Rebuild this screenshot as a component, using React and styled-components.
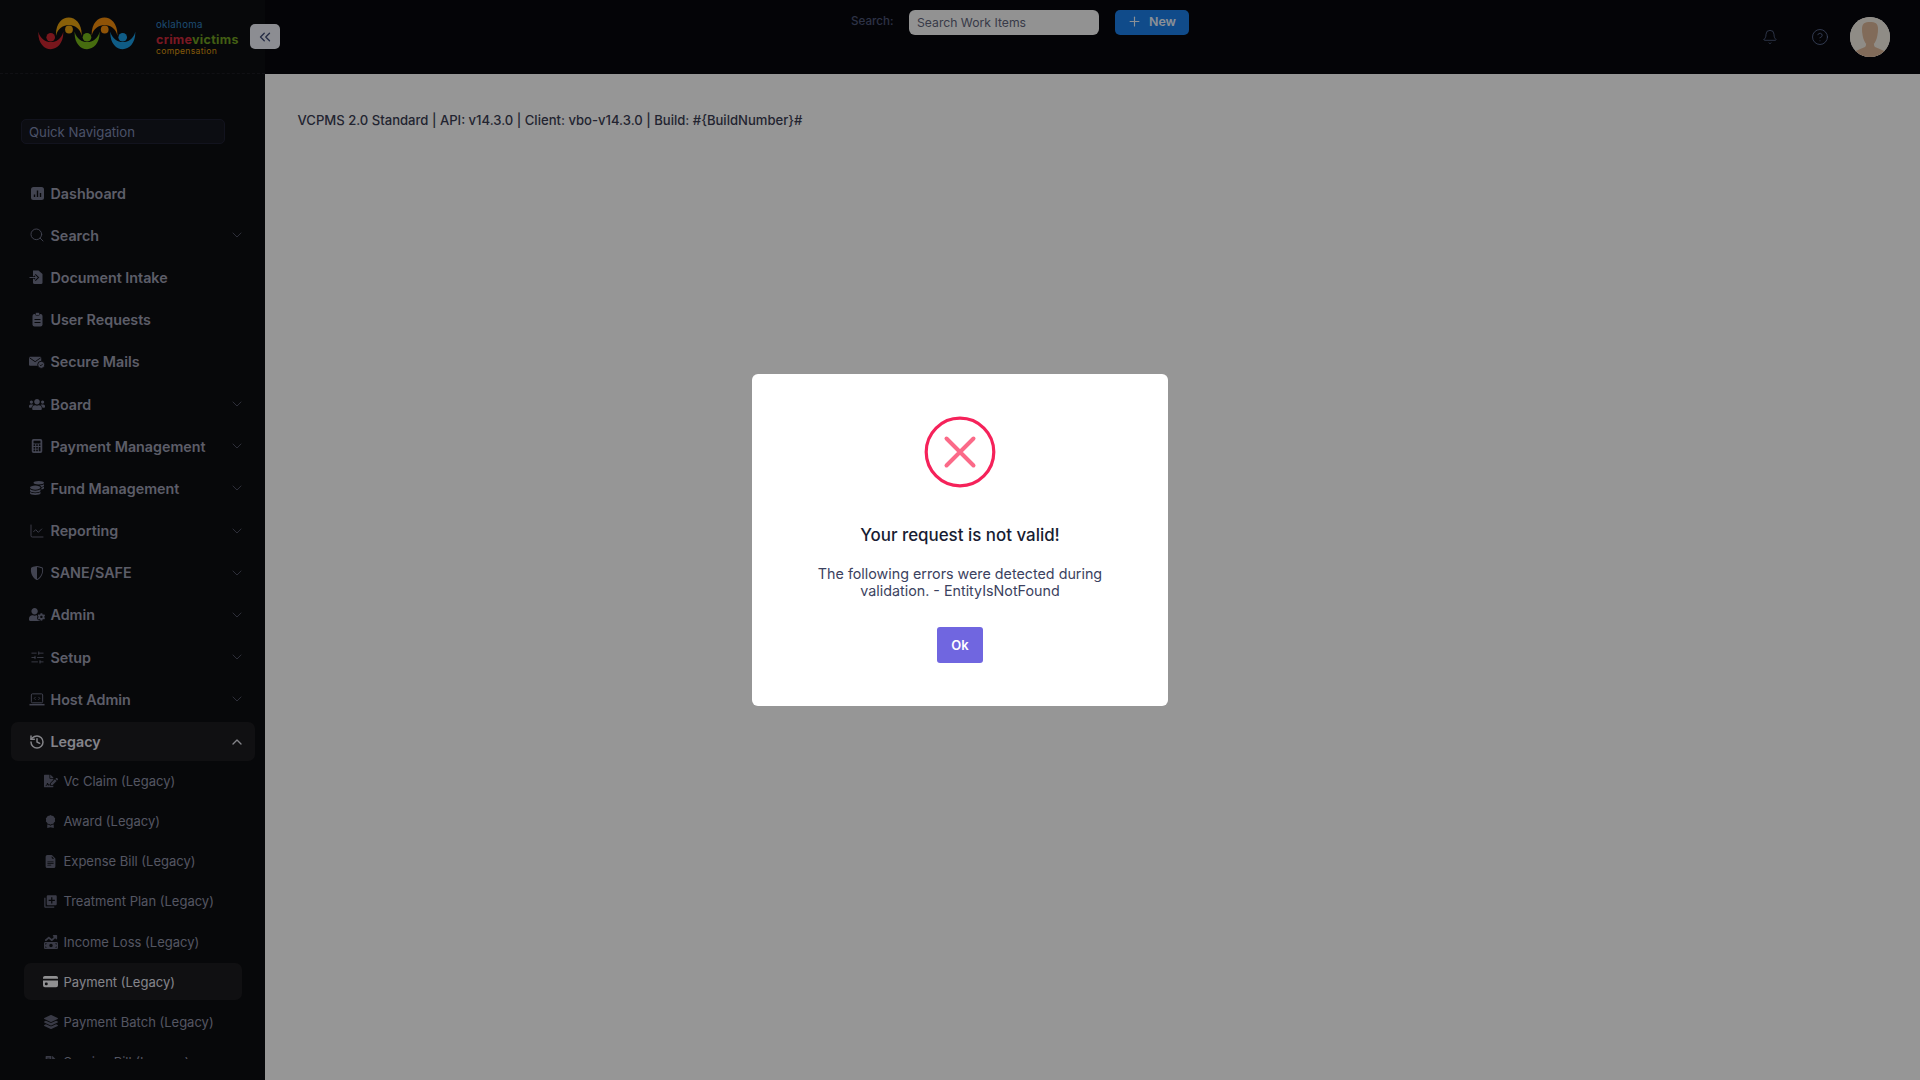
import React from "react";
import styled, { createGlobalStyle } from "styled-components";
import { Search, ChartLine, SlidersHorizontal, History, ChevronDown, ChevronUp, ChevronsLeft, Plus, Bell, CircleHelp } from "lucide-react";
import { FaUsers, FaUserCog, FaFileSignature, FaLayerGroup, FaCoins, FaFileInvoice } from "react-icons/fa";
import { FaMoneyBillTrendUp } from "react-icons/fa6";
import { BsCalculatorFill, BsShieldShaded, BsAwardFill, BsFileEarmarkTextFill, BsCreditCardFill } from "react-icons/bs";
import { MdLibraryAdd } from "react-icons/md";

const GlobalStyle = createGlobalStyle`
  html, body, #root { height: 100%; }
  body {
    margin: 0;
    font-family: Inter, "Liberation Sans", sans-serif;
    background: #f5f5f5;
    overflow: hidden;
  }
  * { box-sizing: border-box; }
`;

const Page = styled.div`
  display: flex;
  height: 1080px;
`;

const Sidebar = styled.aside`
  width: 265px;
  flex-shrink: 0;
  background: #0d0e12;
  display: flex;
  flex-direction: column;
  height: 100%;
`;

const Brand = styled.div`
  height: 74px;
  flex-shrink: 0;
  border-bottom: 1px dashed #1b1c22;
  display: flex;
  align-items: center;
  padding-left: 38px;
  position: relative;
`;

const LogoSvg = styled.svg`
  margin-bottom: 6px;
  flex-shrink: 0;
`;

const BrandText = styled.div`
  margin-left: 20px;
  display: flex;
  flex-direction: column;
  font-family: Inter, sans-serif;
  letter-spacing: 0.3px;
`;

const BrandLine = styled.span`
  font-size: ${(props) => props.size}px;
  line-height: ${(props) => props.lh}px;
  font-weight: ${(props) => props.weight || 400};
  color: ${(props) => props.color};
`;

const Toggle = styled.button`
  position: absolute;
  left: 250px;
  top: 24px;
  z-index: 1;
  width: 30px;
  height: 25px;
  border: 0;
  border-radius: 5px;
  background: #e9ecf4;
  color: #3f4a72;
  display: flex;
  align-items: center;
  justify-content: center;
  padding: 0;
`;

const QuickNav = styled.div`
  margin: 45px 0 0 21px;
  width: 204px;
  height: 25px;
  border: 1px solid #1f2133;
  border-radius: 5px;
  background: #15161f;
  color: #7d88ad;
  font-size: 13.2px;
  line-height: 25px;
  padding-left: 7px;
`;

const NavList = styled.nav`
  margin-top: 30px;
  padding: 0 10px 0 11px;
  height: 884.5px;
  overflow: hidden;
  flex-shrink: 0;
`;

const NavRow = styled.div`
  height: 38.2px;
  margin-bottom: 4px;
  display: flex;
  align-items: center;
  border-radius: 7px;
  padding: 0 10px 0 18px;
  background: ${(props) => (props.open ? "#1c1c1f" : "transparent")};
  color: ${(props) => (props.open ? "#dcdce4" : "#9a9cae")};
  font-size: 14.3px;
  font-weight: 600;
`;

const NavIcon = styled.span`
  width: 16px;
  height: 16px;
  margin-right: 4px;
  flex-shrink: 0;
  display: flex;
  align-items: center;
  justify-content: center;
  color: ${(props) => (props.open ? "#dcdce4" : "#6f7288")};
`;

const NavLabel = styled.span`
  margin-left: 1.5px;
  flex: 1;
`;

const Caret = styled.span`
  display: flex;
  color: ${(props) => (props.open ? "#dcdce4" : "#5d6074")};
`;

const SubList = styled.div`
  margin-top: -2.1px;
  padding: 0 13px;
`;

const SubRow = styled.div`
  height: 36.6px;
  margin-bottom: 3.6px;
  display: flex;
  align-items: center;
  border-radius: 7px;
  padding-left: 18.5px;
  background: ${(props) => (props.active ? "#1c1c1f" : "transparent")};
  color: ${(props) => (props.active ? "#dcdce4" : "#8c8fa3")};
  font-size: 13px;
  font-weight: 400;
`;

const SubIcon = styled.span`
  width: 16px;
  height: 16px;
  margin-right: 5px;
  flex-shrink: 0;
  display: flex;
  align-items: center;
  justify-content: center;
  color: ${(props) => (props.active ? "#f0f0f4" : "#5f6275")};
`;

const Main = styled.div`
  flex: 1;
  display: flex;
  flex-direction: column;
  min-width: 0;
`;

const Header = styled.header`
  height: 74px;
  flex-shrink: 0;
  background: #07080d;
  display: flex;
  padding-top: 10px;
`;

const HeaderCenter = styled.div`
  margin-left: 586px;
  display: flex;
  align-items: flex-start;
`;

const SearchLabel = styled.span`
  width: 58px;
  color: #4c5475;
  font-size: 11.6px;
  font-weight: 500;
  line-height: 25px;
  margin-top: -1.5px;
`;

const SearchBox = styled.div`
  width: 190px;
  height: 25px;
  border-radius: 6px;
  background: #f3f3f3;
  color: #5e6278;
  font-size: 12.2px;
  line-height: 25px;
  padding-left: 8px;
`;

const NewButton = styled.button`
  margin-left: 16px;
  width: 74px;
  height: 25px;
  border: 0;
  border-radius: 5px;
  background: #1b7ee6;
  color: #e8f0fb;
  font-family: inherit;
  font-size: 12.4px;
  font-weight: 600;
  display: flex;
  align-items: center;
  justify-content: center;
  gap: 7px;
  padding: 0 1px 2px 0;
`;

const HeaderRight = styled.div`
  margin-left: auto;
  margin-right: 30px;
  margin-top: 7px;
  display: flex;
  align-items: center;
  align-self: flex-start;
  height: 40px;
`;

const HeaderIcon = styled.span`
  display: flex;
  color: ${(props) => props.color};
  margin-right: ${(props) => props.gap}px;
`;

const Avatar = styled.div`
  width: 40px;
  height: 40px;
  border-radius: 50%;
  overflow: hidden;
  background: #fff;
`;

const Content = styled.main`
  flex: 1;
  background: #fafafa;
  padding: 38px 32.5px;
`;

const Version = styled.div`
  color: #3a3d52;
  font-size: 13.08px;
  font-weight: 500;
  line-height: 16px;
`;

const Overlay = styled.div`
  position: fixed;
  inset: 0;
  z-index: 10;
  background: rgba(0, 0, 0, 0.4);
  display: flex;
  align-items: flex-start;
  justify-content: center;
  padding-top: 374px;
`;

const Modal = styled.div`
  width: 416px;
  height: 332px;
  background: #fff;
  border-radius: 6px;
  display: flex;
  flex-direction: column;
  align-items: center;
  padding-top: 42px;
`;

const ModalTitle = styled.h2`
  margin: 35px 0 0;
  color: #181c32;
  font-size: 16.9px;
  font-weight: 500;
  line-height: 24px;
`;

const ModalText = styled.p`
  margin: 18px 0 0;
  color: #3b4260;
  font-size: 14.3px;
  line-height: 17px;
  text-align: center;
  width: 300px;
`;

const OkButton = styled.button`
  margin-top: 28px;
  width: 46px;
  height: 36px;
  border: 0;
  border-radius: 3px;
  background: #7066e0;
  color: #fff;
  font-family: inherit;
  font-size: 13px;
  font-weight: 600;
  padding: 0;
`;

const DashIcon = () => (
  <svg width="15" height="15" viewBox="0 0 15 15">
    <rect x="1" y="1" width="13" height="13" rx="2.5" fill="currentColor" />
    <path d="M4.5 11V8.5M7.5 11V4.5M10.5 11V7" stroke="#0d0e12" strokeWidth="1.4" />
  </svg>
);

const IntakeIcon = () => (
  <svg width="16" height="16" viewBox="0 0 16 16">
    <path d="M4 1.5h5.5L13.5 5v8.5a1.5 1.5 0 0 1-1.5 1.5H5.5A1.5 1.5 0 0 1 4 13.5z" fill="currentColor" />
    <path d="M0 8.5h8M5.8 6l2.6 2.5L5.8 11" stroke="#0d0e12" strokeWidth="2.6" fill="none" />
    <path d="M0.5 8.5h7.5M5.6 6.2l2.4 2.3-2.4 2.3" stroke="currentColor" strokeWidth="1.1" fill="none" />
  </svg>
);

const RequestIcon = () => (
  <svg width="15" height="15" viewBox="0 0 15 15">
    <rect x="2.5" y="2" width="10" height="12.5" rx="2" fill="currentColor" />
    <rect x="5.5" y="0.5" width="4" height="3" rx="1" fill="currentColor" stroke="#0d0e12" strokeWidth="0.6" />
    <path d="M4.5 7.5h6M4.5 10.5h6" stroke="#0d0e12" strokeWidth="1" />
  </svg>
);

const MailIcon = () => (
  <svg width="17" height="14" viewBox="0 0 17 14">
    <rect x="0" y="1.5" width="13" height="9.5" rx="1.2" fill="currentColor" />
    <path d="M0.5 2.5l6 4.2 6-4.2" stroke="#0d0e12" strokeWidth="1" fill="none" />
    <circle cx="13" cy="10" r="3.8" fill="currentColor" stroke="#0d0e12" strokeWidth="1" />
    <path d="M11.5 10l1.1 1.1 1.9-2" stroke="#0d0e12" strokeWidth="0.9" fill="none" />
  </svg>
);

const LaptopIcon = () => (
  <svg width="17" height="15" viewBox="0 0 17 15" fill="none" stroke="currentColor">
    <rect x="2.5" y="1.5" width="12" height="9.5" rx="1.2" strokeWidth="1" />
    <path d="M0.5 13h16" strokeWidth="1.6" />
    <path d="M7 4.8L5.5 6.3 7 7.8M10 4.8l1.5 1.5L10 7.8" strokeWidth="0.8" />
  </svg>
);

const Smile = ({ x, color }) => (
  <g transform={`translate(${x} 0)`} fill={color}>
    <path d="M0.3 14.7C-0.5 38 26 38 25.300 14.700C22 28.500 4 28.500 0.3 14.7Z" />
    <circle cx="12.7" cy="20.300" r="4.300" />
  </g>
);

const Arch = ({ x, color }) => (
  <g transform={`translate(${x} 0)`} fill={color}>
    <path d="M0 18.700C-1 -5.500 26.500 -5.500 25.700 18.700C23 4.500 3 4.500 0 18.700Z" />
    <circle cx="13" cy="12.500" r="3.900" />
  </g>
);

const LogoMark = () => (
  <LogoSvg width="98" height="33" viewBox="0 0 98 33">
    <Smile x={0} color="#c8262f" />
    <Arch x={18} color="#e5a00f" />
    <Smile x={36.3} color="#76b51a" />
    <Arch x={53.7} color="#ee8a0c" />
    <Smile x={72} color="#1a9ae0" />
  </LogoSvg>
);

const AvatarArt = () => (
  <svg width="40" height="40" viewBox="0 0 40 40">
    <rect width="40" height="40" fill="#efe9df" />
    <path d="M4 40v-5c3-2 7-3 11-5 1-1 1-2 1-3h8c0 1 0 2 1 3 4 2 8 3 11 5v5z" fill="#d8b394" />
    <path d="M12 12c0-6 3-7 8-7s8 1 8 7c0 8-3 17-8 17S12 20 12 12z" fill="#d8b394" />
  </svg>
);

const navItems = [
  { label: "Dashboard", icon: <DashIcon /> },
  { label: "Search", icon: <Search size={16} strokeWidth={1.4} />, caret: true },
  { label: "Document Intake", icon: <IntakeIcon /> },
  { label: "User Requests", icon: <RequestIcon /> },
  { label: "Secure Mails", icon: <MailIcon /> },
  { label: "Board", icon: <FaUsers size={17} />, caret: true },
  { label: "Payment Management", icon: <BsCalculatorFill size={14} />, caret: true },
  { label: "Fund Management", icon: <FaCoins size={14} />, caret: true },
  { label: "Reporting", icon: <ChartLine size={16} strokeWidth={1.3} />, caret: true },
  { label: "SANE/SAFE", icon: <BsShieldShaded size={14} />, caret: true },
  { label: "Admin", icon: <FaUserCog size={17} />, caret: true },
  { label: "Setup", icon: <SlidersHorizontal size={15} strokeWidth={1.3} />, caret: true },
  { label: "Host Admin", icon: <LaptopIcon />, caret: true },
];

const subItems = [
  { label: "Vc Claim (Legacy)", icon: <FaFileSignature size={14} /> },
  { label: "Award (Legacy)", icon: <BsAwardFill size={13} /> },
  { label: "Expense Bill (Legacy)", icon: <BsFileEarmarkTextFill size={13} /> },
  { label: "Treatment Plan (Legacy)", icon: <MdLibraryAdd size={15} /> },
  { label: "Income Loss (Legacy)", icon: <FaMoneyBillTrendUp size={14} /> },
  { label: "Payment (Legacy)", icon: <BsCreditCardFill size={15} />, active: true },
  { label: "Payment Batch (Legacy)", icon: <FaLayerGroup size={14} /> },
  { label: "Service Bill (Legacy)", icon: <FaFileInvoice size={13} /> },
];

export default function App() {
  return (
    <>
      <GlobalStyle />
      <Page>
        <Sidebar>
          <Brand>
            <LogoMark />
            <BrandText>
              <BrandLine size={9.7} lh={14} color="#2f7fbf">oklahoma</BrandLine>
              <BrandLine size={12.5} lh={15} weight={700} color="#c9283a">
                crime<BrandLine size={12.5} lh={15} weight={700} color="#6f9d20">victims</BrandLine>
              </BrandLine>
              <BrandLine size={8.6} lh={9} color="#d9950e">compensation</BrandLine>
            </BrandText>
            <Toggle><ChevronsLeft size={18} strokeWidth={1.8} /></Toggle>
          </Brand>
          <QuickNav>Quick Navigation</QuickNav>
          <NavList>
            {navItems.map((item) => (
              <NavRow key={item.label}>
                <NavIcon>{item.icon}</NavIcon>
                <NavLabel>{item.label}</NavLabel>
                {item.caret && <Caret><ChevronDown size={16} strokeWidth={1.2} /></Caret>}
              </NavRow>
            ))}
            <NavRow open>
              <NavIcon open><History size={16} strokeWidth={2.2} /></NavIcon>
              <NavLabel>Legacy</NavLabel>
              <Caret open><ChevronUp size={16} strokeWidth={2} /></Caret>
            </NavRow>
            <SubList>
              {subItems.map((item) => (
                <SubRow key={item.label} active={item.active}>
                  <SubIcon active={item.active}>{item.icon}</SubIcon>
                  {item.label}
                </SubRow>
              ))}
            </SubList>
          </NavList>
        </Sidebar>
        <Main>
          <Header>
            <HeaderCenter>
              <SearchLabel>Search:</SearchLabel>
              <SearchBox>Search Work Items</SearchBox>
              <NewButton><Plus size={15} strokeWidth={1.8} />New</NewButton>
            </HeaderCenter>
            <HeaderRight>
              <HeaderIcon color="#6a7ba8" gap={33}><Bell size={16} strokeWidth={1} /></HeaderIcon>
              <HeaderIcon color="#6a7ba8" gap={21}><CircleHelp size={18} strokeWidth={1} /></HeaderIcon>
              <Avatar><AvatarArt /></Avatar>
            </HeaderRight>
          </Header>
          <Content>
            <Version>VCPMS 2.0 Standard | API: v14.3.0 | Client: vbo-v14.3.0 | Build: #{"{"}BuildNumber{"}"}#</Version>
          </Content>
        </Main>
      </Page>
      <Overlay>
        <Modal>
          <svg width="72" height="72" viewBox="0 0 72 72">
            <circle cx="36" cy="36" r="33.8" fill="none" stroke="#f5225a" strokeWidth="3.2" />
            <path d="M22.500 22.500l27 27M49.500 22.500l-27 27" stroke="#fb6a88" strokeWidth="4" strokeLinecap="round" />
          </svg>
          <ModalTitle>Your request is not valid!</ModalTitle>
          <ModalText>The following errors were detected during validation. - EntityIsNotFound</ModalText>
          <OkButton>Ok</OkButton>
        </Modal>
      </Overlay>
    </>
  );
}
